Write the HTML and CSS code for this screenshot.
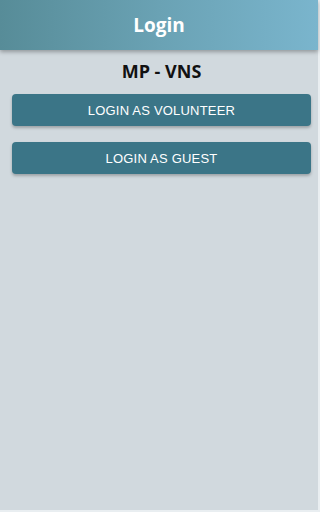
FILE: index.html
```html
<!DOCTYPE html>
<html>
<head>
<meta charset="utf-8">
<meta name="viewport" content="width=device-width, initial-scale=1">
<link rel="stylesheet" href="styles.css">
</head>
<body>
<div class="app">
  <header class="topbar"><h1 class="title">Login</h1></header>
  <main class="content">
    <h2 class="brand">MP - VNS</h2>
    <button class="btn">Login as Volunteer</button>
    <button class="btn">Login as Guest</button>
  </main>
</div>
</body>
</html>
```
FILE: styles.css
```css
html, body { margin: 0; padding: 0; height: 100%; }
body { background: #e9eef1; font-family: "Open Sans", sans-serif; }
.app {
  width: calc(100% - 2px);
  height: calc(100% - 2px);
  background: #d1d9de;
  display: flex;
  flex-direction: column;
}
.topbar {
  height: 50px;
  flex: none;
  background: linear-gradient(90deg, #578c98 0%, #6aa2b4 50%, #7ab5cd 100%);
  box-shadow: 0 2px 4px rgba(0,0,0,0.3);
  display: flex;
  align-items: center;
  justify-content: center;
  position: relative;
  z-index: 1;
}
.title {
  margin: 0;
  color: #fff;
  font-size: 19px;
  font-weight: 700;
  font-family: "Open Sans", sans-serif;
}
.content {
  display: flex;
  flex-direction: column;
  padding: 0 7px 0 12px;
}
.brand {
  margin: 7px 0 9px;
  text-align: center;
  font-size: 18px;
  font-weight: 700;
  color: #111;
  line-height: 28px;
  font-family: "Open Sans", sans-serif;
}
.btn {
  height: 32px;
  border: none;
  border-radius: 4px;
  background: #3b7587;
  color: #fff;
  text-transform: uppercase;
  font-family: "Liberation Sans", Arial, sans-serif;
  font-size: 13px;
  letter-spacing: 0.2px;
  box-shadow: 0 2px 3px rgba(0,0,0,0.25);
  margin-bottom: 16px;
  padding: 0;
}
```
